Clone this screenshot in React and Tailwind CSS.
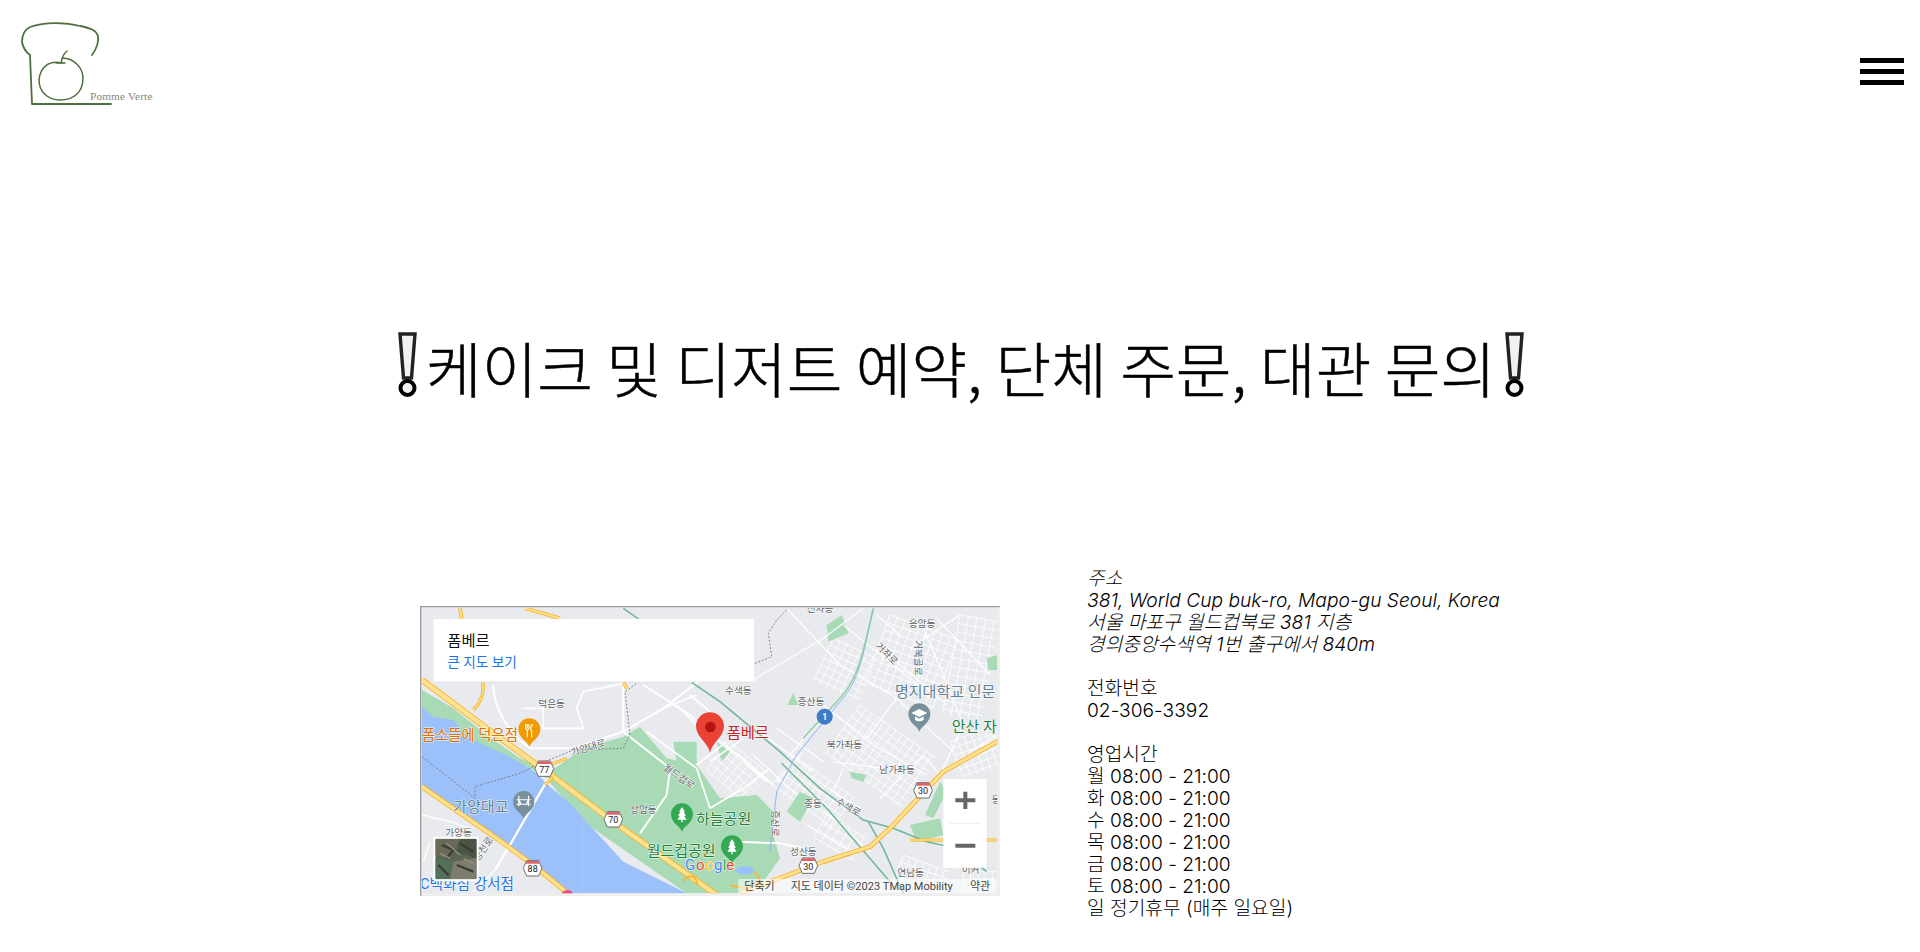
const sans = "font-['Inter','Noto_Sans_CJK_KR',sans-serif]";

function Bang() {
  return (
    <svg width="19" height="66" viewBox="0 0 19 66" className="shrink-0 -translate-y-[2px]">
      <path d="M2 2H17L13.5 46H5.5Z" fill="#f1f1f1" stroke="#222" strokeWidth="3.4" />
      <circle cx="9.5" cy="56" r="7" fill="#f1f1f1" stroke="#000" strokeWidth="4" />
    </svg>
  );
}

function Logo() {
  return (
    <svg width="160" height="112" viewBox="0 0 160 112" className="block">
      <g fill="none" stroke="#4f6f3f" strokeLinecap="round" strokeLinejoin="round">
        <path d="M92 55C97 48 99 42 98 36C96 30 90 28 80 26C65 22 45 22 30 27C24 30 22 36 22 42C23 48 26 52 30 55L32 104L111 104" strokeWidth="1.8" />
        <path d="M62 63C48 60 40 68 39 80C39 92 48 100 60 100C74 100 83 92 83 78C83 68 74 58 62 58" strokeWidth="1.5" />
        <path d="M67 51C63 54 62 58 61 63M56 63H65" strokeWidth="1.5" />
      </g>
      <text x="90" y="100" fontSize="11.2" letterSpacing="0.2" fill="#7f8679" fontFamily="'Liberation Serif',serif">Pomme Verte</text>
    </svg>
  );
}

function Pin({ x, y, c, children, s = 1 }) {
  return (
    <g transform={`translate(${x} ${y}) scale(${s})`}>
      <path d="M0 50C-5 34-33 24-33 -2A33 33 0 0 1 33 -2C33 24 5 34 0 50Z" fill={c} />
      {children}
    </g>
  );
}

function Road({ d, w = 5 }) {
  return <path d={d} fill="none" stroke="#fff" strokeWidth={w} strokeLinejoin="round" />;
}

function Hwy({ d, w = 13 }) {
  return (
    <g fill="none" strokeLinejoin="round">
      <path d={d} stroke="#fbb01c" strokeWidth={w + 5} />
      <path d={d} stroke="#fde293" strokeWidth={w} />
    </g>
  );
}

function Streets({ x, y, w, h, r = 35, step = 22, sw = 2.6 }) {
  const lines = [];
  for (let i = 0; i <= w; i += step) lines.push(`M${i} 0V${h}`);
  for (let j = 0; j <= h; j += step) lines.push(`M0 ${j}H${w}`);
  return (
    <path
      d={lines.join("")}
      transform={`translate(${x} ${y}) rotate(${r})`}
      fill="none"
      stroke="#fff"
      strokeWidth={sw}
      strokeOpacity="0.9"
    />
  );
}

function Shield({ x, y, n }) {
  return (
    <g transform={`translate(${x} ${y})`}>
      <path d="M-18-23H18L28 0L18 23H-18L-28 0Z" fill="#fff" stroke="#555" strokeWidth="2.5" />
      <path d="M-17-22H17L20-14H-20Z" fill="#e2626b" />
      <text y="12" textAnchor="middle" fontSize="27" fill="#222">{n}</text>
    </g>
  );
}

function Label({ x, y, s = 29, c = "#5f6368", r, a, children }) {
  return (
    <text
      x={x}
      y={y}
      fontSize={s}
      fontWeight="400"
      fill={c}
      textAnchor={a}
      stroke="#fff"
      strokeOpacity="0.85"
      strokeWidth="3.5"
      paintOrder="stroke"
      strokeLinejoin="round"
      transform={r ? `rotate(${r} ${x} ${y})` : undefined}
    >
      {children}
    </text>
  );
}

function MapPicture() {
  return (
    <svg
      width="580"
      height="290"
      viewBox="30 33 1740 870"
      className="block shrink-0"
      fontFamily="Roboto,'Noto Sans CJK KR',sans-serif"
    >
      <defs>
        <clipPath id="clip"><rect x="36" y="39" width="1726" height="856" /></clipPath>
        <clipPath id="sat"><rect x="76" y="731" width="124" height="122" rx="4" /></clipPath>
      </defs>
      <rect x="30" y="33" width="1740" height="870" fill="#eeeeee" />
      <g clipPath="url(#clip)">
        <rect x="36" y="39" width="1726" height="856" fill="#e8eaed" />

        {/* street grids */}
        <Streets x={1150} y={480} w={220} h={120} />
        <Streets x={960} y={440} w={150} h={110} r={40} />
        <Streets x={1350} y={330} w={280} h={180} />
        <Streets x={1270} y={130} w={150} h={140} r={25} />
        <Streets x={1440} y={60} w={220} h={220} r={20} step={24} />
        <Streets x={1650} y={60} w={120} h={300} r={10} step={26} />
        <Streets x={1620} y={440} w={150} h={120} r={-20} />
        <Streets x={1480} y={780} w={150} h={120} r={20} />
        <Streets x={1250} y={660} w={140} h={80} r={30} step={26} />
        <Streets x={1660} y={830} w={100} h={60} r={0} />

        {/* park and banks */}
        <path d="M36 285L130 340L230 420L330 490L420 530L520 460L640 425L690 395L770 490L860 510L930 610L1040 600L1090 650L1090 720L1110 790L1060 860L1000 895L830 895L520 680L400 540L280 480L180 440L90 400L36 420Z" fill="#a8dab5" />
        <path d="M1130 650L1170 590L1210 610L1170 680Z M1250 90L1295 60L1315 115L1255 140Z M1132 330L1150 295L1165 330Z M1320 530L1370 540L1360 560L1325 550Z M1500 690L1590 670L1600 720L1520 740Z M1730 190L1762 180V225L1735 225Z M1545 660L1590 560L1610 590L1570 670Z M920 440L960 470L935 500Z M790 440L860 440L860 510L800 500Z" fill="#a8dab5" />

        {/* river */}
        <path d="M36 335L70 365L130 375L175 430L290 480L375 530L420 575L480 625L530 680L640 800L830 895L470 895L360 810L260 735L36 570Z" fill="#9cc0f9" />
        <path d="M517 490V895" stroke="#fff" strokeOpacity="0.2" strokeWidth="2" />

        {/* minor roads */}
        <Road d="M250 270C250 340 300 420 360 460H490L640 410L760 340L930 210" w={6} />
        <Road d="M340 340H400V400H520L500 340L520 290L640 265" />
        <Road d="M640 260V410L780 520L770 600L690 715" w={6} />
        <Road d="M710 410L860 520L900 640" w={5} />
        <Road d="M700 270L840 360L930 440L1010 500L1090 570M760 340L860 300M800 330L870 400M840 300L900 350M860 510L950 440M900 500L1000 430" w={5} />
        <Road d="M900 640L1000 580L1080 520M1000 500L1070 560" w={5} />
        <Road d="M36 660L120 680L180 700M200 760L120 690M60 740L40 800M260 820L190 890" w={4} />
        <Road d="M415 550L300 750L255 825" w={7} />
        <Road d="M980 740L1110 745L1180 760" w={6} />
        <Road d="M1020 260L1240 130L1360 40M1130 40L1290 210L1460 310L1630 470M1300 90L1500 250L1560 300M1240 330L1390 450L1550 540M1270 500L1420 520M1300 520L1270 590L1350 640M1460 200L1610 330M1460 310L1370 430M1540 100L1600 240L1660 390M1660 390L1590 540M1180 470L1100 560M1230 380L1130 490M1060 420L1210 530M1100 400L1240 500M1030 480L1160 600M1410 610L1540 480L1590 540M1250 650L1380 770M1190 690L1340 780M1400 60L1470 120M1580 70L1740 240M1650 60L1500 160M1760 420L1680 470" w={3.5} />

        {/* dashed boundaries */}
        <path d="M36 485L195 610V575L330 535L380 510L490 465L640 460L660 420L645 290L680 265M1035 205L1085 185L1075 115L1100 75L1135 40" fill="none" stroke="#70757a" strokeWidth="2.5" strokeDasharray="6 5" />

        {/* subway */}
        <g fill="none" stroke="#6fb59a" strokeWidth="4.5">
          <path d="M845 262L930 320L1110 470L1230 580L1360 675L1450 700L1550 740L1640 760L1730 830" />
          <path d="M1115 505L1250 640L1440 860" />
          <path d="M1375 680L1420 760L1480 895" />
          <path d="M640 40L690 75" />
        </g>
        <path d="M1390 40C1360 170 1350 260 1290 320L1160 480L1100 590L1080 770" fill="none" stroke="#8ab4f8" strokeWidth="3" />
        <path d="M1390 40C1360 170 1345 255 1285 315L1180 430" fill="none" stroke="#81c995" strokeWidth="5" strokeOpacity="0.8" />

        {/* highways */}
        <Hwy d="M36 255L230 400L430 545L610 680L920 900" />
        <Hwy d="M36 575L260 730L370 810L480 900" w={10} />
        <Hwy d="M430 545L405 570M405 515L470 490" w={4} />
        <Hwy d="M345 40L450 70M150 40L155 70" w={6} />
        <Hwy d="M218 262C225 300 205 330 190 345M640 262L650 280" w={5} />
        <Hwy d="M990 895L1240 800L1380 755L1440 700L1600 530L1770 435" w={9} />
        <Hwy d="M1500 735H1760" w={4} />
        <path d="M820 860A20 20 0 0 1 860 870M960 870A30 16 0 0 0 1030 830" stroke="#f9b233" strokeWidth="5" fill="none" />
        <ellipse cx="1005" cy="826" rx="28" ry="12" fill="#9cc0f9" />
        <circle cx="472" cy="905" r="20" fill="#ea4c89" />

        <Shield x={403} y={521} n="77" />
        <Shield x={610} y={673} n="70" />
        <Shield x={368} y={820} n="88" />
        <Shield x={1539} y={586} n="30" />
        <Shield x={1195} y={812} n="30" />

        {/* labels */}
        <Label x={385} y={335}>덕은동</Label>
        <Label x={36} y={436} s={43} c="#d96f00">폼소뜰에 덕은점</Label>
        <Label x={487} y={484} r={-18}>가양대로</Label>
        <Label x={130} y={650} s={45} c="#5f7f93">가양대교</Label>
        <Label x={660} y={655}>상암동</Label>
        <Label x={758} y={522} r={35}>월드컵로</Label>
        <Label x={106} y={722}>가양동</Label>
        <Label x={205} y={800} r={-55}>양천로</Label>
        <Label x={30} y={882} s={44} c="#1a73e8">C백화점 강서점</Label>
        <Label x={858} y={688} s={45} c="#188038">하늘공원</Label>
        <Label x={710} y={782} s={45} c="#188038">월드컵공원</Label>
        <Label x={945} y={298}>수색동</Label>
        <Label x={1163} y={329}>증산동</Label>
        <Label x={1496} y={96}>응암동</Label>
        <Label x={1190} y={50}>신사동</Label>
        <Label x={1395} y={155} r={45}>거좌로</Label>
        <Label x={1515} y={135} r={90}>거북골로</Label>
        <Label x={1455} y={307} s={45} c="#5f7f93">명지대학교 인문</Label>
        <Label x={1625} y={410} s={45} c="#188038">안산 자</Label>
        <Label x={1250} y={458}>북가좌동</Label>
        <Label x={1408} y={535}>남가좌동</Label>
        <Label x={1182} y={635}>중동</Label>
        <Label x={1275} y={625} r={30}>수색로</Label>
        <Label x={1085} y={645} r={90}>증산로</Label>
        <Label x={1140} y={780}>성산동</Label>
        <Label x={1462} y={842}>연남동</Label>
        <Label x={1745} y={625}>동</Label>
        <Label x={1655} y={835}>이커</Label>

        <Pin x={358} y={405} c="#f29900">
          <path d="M-11-18V-6C-11-1-6-1-6 3V22M-6-18V-5M-1-18V-6C-1-1-6-1-6 3M11-18C3-12 3 0 7 3V22" fill="none" stroke="#fff" strokeWidth="3.4" />
        </Pin>
        <Pin x={341} y={622} c="#78909c" s={0.97}>
          <path d="M-15-20V12M15-20V12M-22-8H22M-22 6H22M-15-8L-8 6M15-8L8 6" fill="none" stroke="#fff" strokeWidth="3.5" />
        </Pin>
        <Pin x={816} y={660} c="#34a853">
          <path d="M0-24L9-10H5L12 2H6L14 14H-14L-6 2H-12L-5-10H-9Z M-2 14H2V22H-2Z" fill="#fff" />
        </Pin>
        <Pin x={966} y={756} c="#34a853">
          <path d="M0-24L9-10H5L12 2H6L14 14H-14L-6 2H-12L-5-10H-9Z M-2 14H2V22H-2Z" fill="#fff" />
        </Pin>
        <Pin x={1528} y={360} c="#78909c">
          <path d="M0-18L24-6L0 6L-24-6Z M-13 4V14C-6 20 6 20 13 14V4L0 11Z" fill="#fff" />
        </Pin>

        {/* red marker */}
        <path d="M900 473C895 445 858 425 858 394A42 42 0 0 1 942 394C942 425 905 445 900 473Z" fill="#ea4335" />
        <circle cx="901" cy="396" r="16" fill="#b31412" />
        <Label x={950} y={428} s={46} c="#c5221f">폼베르</Label>

        <circle cx="1244" cy="365" r="24" fill="#3d7ac7" />
        <text x="1244" y="375" textAnchor="middle" fontSize="26" fontWeight="700" fill="#fff">1</text>

        {/* Google logo */}
        <g fontSize="45" fontFamily="Roboto,sans-serif" stroke="#fff" strokeWidth="3" paintOrder="stroke">
          <text x="825" y="826" fill="#4285f4">G</text>
          <text x="858" y="826" fill="#ea4335">o</text>
          <text x="885" y="826" fill="#fbbc05">o</text>
          <text x="912" y="826" fill="#4285f4">g</text>
          <text x="938" y="826" fill="#34a853">l</text>
          <text x="949" y="826" fill="#ea4335">e</text>
        </g>

        {/* attribution */}
        <rect x="985" y="852" width="775" height="43" fill="#fff" fillOpacity="0.6" />
        <g fontSize="33" fill="#444" fontWeight="400">
          <text x="1003" y="884">단축키</text>
          <text x="1142" y="884">지도 데이터 ©2023 TMap Mobility</text>
          <text x="1680" y="884">약관</text>
        </g>

        {/* info card */}
        <rect x="70" y="74" width="962" height="188" rx="3" fill="#000" fillOpacity="0.1" />
        <rect x="70" y="72" width="962" height="188" rx="3" fill="#fff" />
        <text x="112" y="152" fontSize="46" fontWeight="400" fill="#111">폼베르</text>
        <text x="112" y="216" fontSize="41" fontWeight="400" fill="#1a73e8">큰 지도 보기</text>

        {/* zoom control */}
        <rect x="1600" y="552" width="130" height="266" rx="3" fill="#fff" />
        <path d="M1666 590V642M1636 616H1696M1636 752H1696" stroke="#666" strokeWidth="12" />
        <path d="M1618 685H1715" stroke="#e6e6e6" strokeWidth="2" />

        {/* satellite toggle */}
        <rect x="70" y="725" width="136" height="134" rx="6" fill="#fff" />
        <g clipPath="url(#sat)">
          <rect x="76" y="731" width="124" height="122" fill="#5b6450" />
          <path d="M76 731H150L120 790L76 780Z" fill="#6b6a58" />
          <path d="M150 731H200V790L140 770Z" fill="#4a5443" />
          <path d="M76 790L130 800L110 853H76Z" fill="#53705a" />
          <path d="M130 800L200 790V853H120Z" fill="#7c7d6e" />
          <path d="M95 750L130 765L110 790M150 745L190 770M140 810L190 830M85 810L115 840" stroke="#3a3d32" strokeWidth="7" fill="none" />
          <path d="M110 745L150 780M160 790L190 805M90 775L120 790" stroke="#95917f" strokeWidth="4" fill="none" />
        </g>
      </g>
      <path d="M31 902V34H1769" fill="none" stroke="#9a9a9a" strokeWidth="6" />
    </svg>
  );
}

const address = ["381, World Cup buk-ro, Mapo-gu Seoul, Korea", "서울 마포구 월드컵북로 381 지층", "경의중앙수색역 1번 출구에서 840m"];
const hours = ["월", "화", "수", "목", "금", "토"];

export default function App() {
  return (
    <div className={`${sans} h-[952px] overflow-hidden bg-white text-black`}>
      <header className="flex items-start justify-between pr-4">
        <Logo />
        <button className="mt-[58px] flex w-[44px] flex-col gap-[6px]" aria-label="menu">
          <span className="h-[5px] bg-black" />
          <span className="h-[5px] bg-black" />
          <span className="h-[5px] bg-black" />
        </button>
      </header>

      <h1 className="mt-[220px] flex h-[70px] items-center justify-center pl-[2px] text-[60.5px] font-light leading-[70px]">
        <Bang />
        <span className="mx-[9px] font-['Noto_Sans_CJK_KR',sans-serif] [-webkit-text-stroke:0.5px_black]">케이크 및 디저트 예약, 단체 주문, 대관 문의</span>
        <Bang />
      </h1>

      <section className="mt-[164px] flex items-start pl-[420px]">
        <div className="mt-[40px]"><MapPicture /></div>
        <div className="ml-[87px] pt-[1px] text-[19.2px] font-light leading-[22px]">
          <p className="italic">
            주소
            {address.map((a) => <span key={a} className="block">{a}</span>)}
          </p>
          <p className="mt-[22px]">전화번호<br />02-306-3392</p>
          <p className="mt-[22px]">
            영업시간
            {hours.map((d) => <span key={d} className="block">{d} 08:00 - 21:00</span>)}
            <span className="block">일 정기휴무 (매주 일요일)</span>
          </p>
        </div>
      </section>
    </div>
  );
}
